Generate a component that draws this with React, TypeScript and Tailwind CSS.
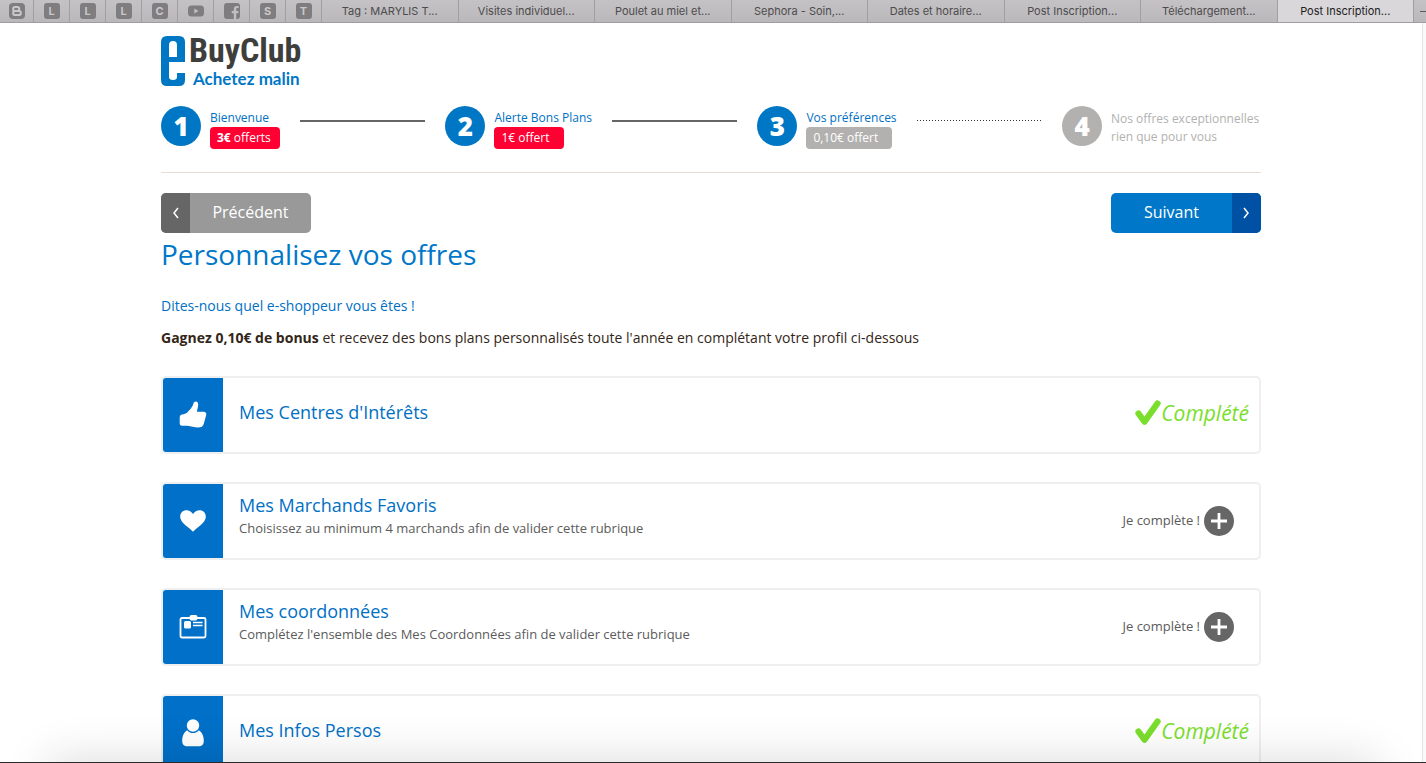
import clsx from "clsx";

interface Step {
  label: string;
  badge?: React.ReactNode;
  badgeClass?: string;
  done: boolean;
  line?: string;
}

interface Section {
  title: string;
  help?: string;
  icon: React.ReactNode;
  completed: boolean;
}

const pinnedTabs = [
  { name: "Blogger", mark: "blogger" },
  { name: "L", mark: "L" },
  { name: "L", mark: "L" },
  { name: "L", mark: "L" },
  { name: "C", mark: "C" },
  { name: "YouTube", mark: "youtube" },
  { name: "Facebook", mark: "facebook" },
  { name: "S", mark: "S" },
  { name: "T", mark: "T" },
];

const tabs = [
  "Tag : MARYLIS T...",
  "Visites individuel...",
  "Poulet au miel et...",
  "Sephora - Soin,...",
  "Dates et horaire...",
  "Post Inscription...",
  "Téléchargement...",
  "Post Inscription...",
];

const steps: Step[] = [
  {
    label: "Bienvenue",
    badge: (
      <>
        <b>3€</b> offerts
      </>
    ),
    badgeClass: "bg-[#ff0033] pr-2 font-medium",
    done: true,
    line: "h-[2px] bg-[#666666]",
  },
  {
    label: "Alerte Bons Plans",
    badge: "1€ offert",
    badgeClass: "bg-[#ff0033] pr-[14px] font-medium",
    done: true,
    line: "h-[2px] bg-[#666666]",
  },
  {
    label: "Vos préférences",
    badge: "0,10€ offert",
    badgeClass: "bg-[#b2b1af] pr-[14px]",
    done: true,
    line: "h-px bg-[repeating-linear-gradient(90deg,#333_0_1px,transparent_1px_3px)]",
  },
  { label: "Nos offres exceptionnelles rien que pour vous", done: false },
];

const ThumbIcon = () => (
  <svg className="size-7" viewBox="0 0 28 28" fill="#fff">
    <path d="M15 1.200C16.800-.3 19.200.5 19.200 3.500c0 2.800-1 5-1.300 7.300H24.500c2.400 0 3.200 1.700 2.600 3.700L24.700 23c-.7 2.500-2.500 3.500-5.500 3.500-4 0-7-1.500-11-1.800H3c-1.500 0-2.300-1-2.300-2.500v-5.500c0-2 .8-3 2.500-3.300 2-.3 3.500-.8 5-2C10.800 9 13 6.500 14 4 14.400 2.800 14.400 1.700 15 1.200z" />
  </svg>
);

const HeartIcon = () => (
  <svg className="size-7" viewBox="0 0 28 28" fill="#fff">
    <path d="M14 7C15.500 4.500 18 3.200 20.500 3.200c3.700 0 6.300 2.700 6.300 6.300 0 4-3 7-6.500 9.700-2.500 1.900-4.600 3.600-6.300 5.600-1.700-2-3.800-3.700-6.300-5.600C4.200 16.500 1.200 13.500 1.200 9.500c0-3.600 2.600-6.300 6.300-6.300C10 3.200 12.500 4.500 14 7z" />
  </svg>
);

const CardIcon = () => (
  <svg className="size-7" viewBox="0 0 28 28" fill="none">
    <rect x="1.500" y="5" width="25" height="19.500" rx="1.500" stroke="#fff" strokeWidth="1.800" />
    <rect x="10.500" y="2" width="8" height="5.500" rx="2" fill="#fff" />
    <rect x="5" y="8" width="7" height="7.500" rx="1.500" fill="#fff" />
    <path d="M14 9.500h9.500M14 12.500h9.500" stroke="#fff" strokeWidth="1.500" />
  </svg>
);

const PersonIcon = () => (
  <svg className="size-7" viewBox="0 0 28 28" fill="#fff">
    <circle cx="14" cy="6.500" r="6.200" />
    <path d="M8.200 11.200c1.300 1.800 3.400 2.900 5.800 2.900s4.500-1.100 5.800-2.900c3 1.700 5 5.800 5 10.300 0 4.200-1.800 5.700-5.300 5.700h-11c-3.500 0-5.300-1.500-5.300-5.700 0-4.500 2-8.600 5-10.300z" />
  </svg>
);

const sections: Section[] = [
  { title: "Mes Centres d'Intérêts", icon: <ThumbIcon />, completed: true },
  {
    title: "Mes Marchands Favoris",
    help: "Choisissez au minimum 4 marchands afin de valider cette rubrique",
    icon: <HeartIcon />,
    completed: false,
  },
  {
    title: "Mes coordonnées",
    help: "Complétez l'ensemble des Mes Coordonnées afin de valider cette rubrique",
    icon: <CardIcon />,
    completed: false,
  },
  { title: "Mes Infos Persos", icon: <PersonIcon />, completed: true },
];

const PinnedIcon = ({ mark }: { mark: string }) => {
  if (mark === "youtube") {
    return (
      <svg className="size-4" viewBox="0 0 16 16">
        <rect x="0" y="2.500" width="16" height="11" rx="3.500" fill="#7f7d7f" />
        <path d="M6.300 5.500v5l4.200-2.500z" fill="#c1bfc1" />
      </svg>
    );
  }

  if (mark === "facebook") {
    return (
      <svg className="size-4" viewBox="0 0 16 16">
        <rect width="16" height="16" rx="3" fill="#7f7d7f" />
        <path
          d="M9.800 16v-5.800H7.700V7.900h2.100V6.200c0-2.100 1.200-3.300 3.200-3.300h1.600v2.200h-1.200c-.9 0-1.200.4-1.200 1.200v1.600h2.300l-.3 2.300h-2V16z"
          fill="#c1bfc1"
        />
      </svg>
    );
  }

  if (mark === "blogger") {
    return (
      <svg className="size-4" viewBox="0 0 16 16">
        <rect width="16" height="16" rx="4" fill="#7f7d7f" />
        <rect x="4.200" y="4" width="6" height="4" rx="1.800" fill="none" stroke="#c9c7c9" strokeWidth="2" />
        <rect x="4.200" y="8" width="7.600" height="4" rx="1.800" fill="none" stroke="#c9c7c9" strokeWidth="2" />
      </svg>
    );
  }

  return (
    <span className="flex size-4 items-center justify-center rounded-[3px] bg-[#7f7d7f] text-[11px] font-bold text-[#c9c7c9]">
      {mark}
    </span>
  );
};

const TabBar = () => (
  <nav className="flex h-[23px] shrink-0 border-b border-[#9f9d9f] bg-linear-to-b from-[#c4c2c4] to-[#bab8ba] font-[Inter,sans-serif] text-[11px] text-[#4d4b4d]">
    {pinnedTabs.map((tab, i) => (
      <a
        key={i}
        href="#"
        aria-label={tab.name}
        className="flex w-9 shrink-0 items-center justify-center border-r border-[#a19fa1] first:w-[34px]"
      >
        <PinnedIcon mark={tab.mark} />
      </a>
    ))}
    {tabs.map((tab, i) => (
      <a
        key={i}
        href="#"
        className={clsx(
          "flex min-w-0 flex-1 items-center justify-center whitespace-nowrap border-r border-[#a19fa1]",
          i === tabs.length - 1 && "bg-[#d9d7d9] text-[#1e1c1e]"
        )}
      >
        {tab}
      </a>
    ))}
    <button type="button" aria-label="Nouvel onglet" className="flex w-3 shrink-0 items-center justify-end">
      <span className="h-px w-[6px] bg-[#5d5b5d]" />
    </button>
  </nav>
);

const Logo = () => (
  <a href="/" className="flex w-fit gap-1">
    <svg className="h-[50px] w-6 shrink-0" viewBox="0 0 24 50" aria-hidden="true">
      <path
        fill="#0077c5"
        fillRule="evenodd"
        d="M6 0h12q6 0 6 6v20H8v15q0 3 4 3t4-3v-4h8v7q0 6-6 6H6q-6 0-6-6V6q0-6 6-6zM8 21h8V9q0-4-4-4T8 9z"
      />
    </svg>
    <span className="flex flex-col">
      <span className="font-['Liberation_Sans_Narrow','Roboto_Condensed','Open_Sans_Condensed',sans-serif] text-[34px] font-bold leading-7 text-[#3e3e3d]">
        BuyClub
      </span>
      <span className="pl-1 font-[Lato,sans-serif] text-[17px] font-bold leading-[30px] text-[#0077c5]">
        Achetez malin
      </span>
    </span>
  </a>
);

const StepBar = () => (
  <ol className="mt-3 flex gap-5 border-b border-[#e6ddd3] pb-[23px]">
    {steps.map((step, i) => (
      <li key={step.label} className={clsx("flex gap-5", step.line && "flex-auto")}>
        <div className="flex shrink-0 gap-[9px]">
          <span
            className={clsx(
              "flex size-10 items-center justify-center rounded-full text-[26px] font-extrabold leading-10 text-white",
              step.done ? "bg-[#0077c5]" : "bg-[#b2b1af]"
            )}
          >
            {i + 1}
          </span>
          {step.badge ? (
            <div className="pt-[3px] text-xs">
              <p className="leading-[18px] text-[#0070c5]">{step.label}</p>
              <p
                className={clsx(
                  "w-fit min-w-[70px] rounded pl-[7px] leading-[22px] text-white",
                  step.badgeClass
                )}
              >
                {step.badge}
              </p>
            </div>
          ) : (
            <p className="w-[150px] pt-1 text-xs leading-[18px] text-[#b2b1af]">
              {step.label}
            </p>
          )}
        </div>
        {step.line && <span className={clsx("mt-[14px] flex-1", step.line)} />}
      </li>
    ))}
  </ol>
);

const Completed = () => (
  <p className="flex items-center pr-[10px] pb-1 text-[21px] italic leading-8 text-[#7ade2c]">
    <svg className="size-[26px]" viewBox="0 0 26 26" fill="none">
      <path d="M3.500 13.500l6 8.300L22.500 3.500" stroke="#7ade2c" strokeWidth="6.200" strokeLinecap="round" strokeLinejoin="round" />
    </svg>
    Complété
  </p>
);

const AddButton = () => (
  <button type="button" className="flex items-center gap-1 pr-[25px] text-[13px] text-[#5b5b5b]">
    Je complète !
    <svg className="size-[30px]" viewBox="0 0 30 30">
      <circle cx="15" cy="15" r="15" fill="#666" />
      <path d="M7 15h16M15 7v16" stroke="#fff" strokeWidth="2.800" />
    </svg>
  </button>
);

const SectionCard = ({ section }: { section: Section }) => (
  <li className="flex h-[78px] rounded-[5px] border-2 border-[#efefef] bg-white">
    <span className="flex w-[60px] shrink-0 items-center justify-center rounded-l-[3px] bg-[#0070c8]">
      {section.icon}
    </span>
    <div
      className={clsx(
        "flex flex-1 flex-col justify-center pl-4",
        section.help ? "pb-[10px]" : "pb-[6px]"
      )}
    >
      <h2 className="text-lg leading-6 text-[#0070c5]">{section.title}</h2>
      {section.help && (
        <p className="text-[13px] leading-[22px] text-[#5b5b5b]">{section.help}</p>
      )}
    </div>
    {section.completed ? <Completed /> : <AddButton />}
  </li>
);

const App: React.FC = () => {
  return (
    <div className="flex h-screen flex-col overflow-hidden bg-white font-['Open_Sans',sans-serif]">
      <TabBar />
      <div className="relative flex min-h-0 flex-1 overflow-hidden border-b border-[#2b2b2b]">
        <main className="min-w-0 flex-1 px-4">
          <div className="mx-auto max-w-[1100px] pt-[13px]">
            <Logo />
            <StepBar />

            <div className="mt-5 flex justify-between text-base text-white">
              <button type="button" className="flex h-10 w-[150px] overflow-hidden rounded-[5px] bg-[#999999]">
                <span className="flex h-full w-[29px] items-center justify-center bg-[#666666]">
                  <svg className="h-3 w-2" viewBox="0 0 8 12" fill="none" stroke="#fff" strokeWidth="1.500">
                    <path d="M6 1L2 6l4 5" />
                  </svg>
                </span>
                <span className="flex-1 leading-[38px]">Précédent</span>
              </button>
              <button type="button" className="flex h-10 w-[150px] overflow-hidden rounded-[5px] bg-[#0077c8]">
                <span className="flex-1 font-medium leading-[38px]">Suivant</span>
                <span className="flex h-full w-[29px] items-center justify-center bg-[#0051a3]">
                  <svg className="h-3 w-2" viewBox="0 0 8 12" fill="none" stroke="#fff" strokeWidth="1.500">
                    <path d="M1 1l4 5-4 5" />
                  </svg>
                </span>
              </button>
            </div>

            <h1 className="text-[28px] leading-[42px] text-[#0077c8]">
              Personnalisez vos offres
            </h1>
            <p className="mt-5 text-sm leading-[22px] text-[#0070c5]">
              Dites-nous quel e-shoppeur vous êtes !
            </p>
            <p className="mt-[10px] text-sm leading-[22px] text-[#332618]">
              <strong>Gagnez 0,10€ de bonus</strong> et recevez des bons plans
              personnalisés toute l'année en complétant votre profil ci-dessous
            </p>

            <ul className="mt-[27px] flex flex-col gap-7">
              {sections.map((section) => (
                <SectionCard key={section.title} section={section} />
              ))}
            </ul>
          </div>
        </main>
        <div className="w-1 shrink-0 border-l border-[#e4e4e4] bg-[#fafafa]" />
        {/* shade cast by the dock under the window */}
        <div className="pointer-events-none absolute inset-x-12 top-full h-10 shadow-[0_0_48px_rgba(0,0,0,0.16)]" />
      </div>
    </div>
  );
};

export default App;
